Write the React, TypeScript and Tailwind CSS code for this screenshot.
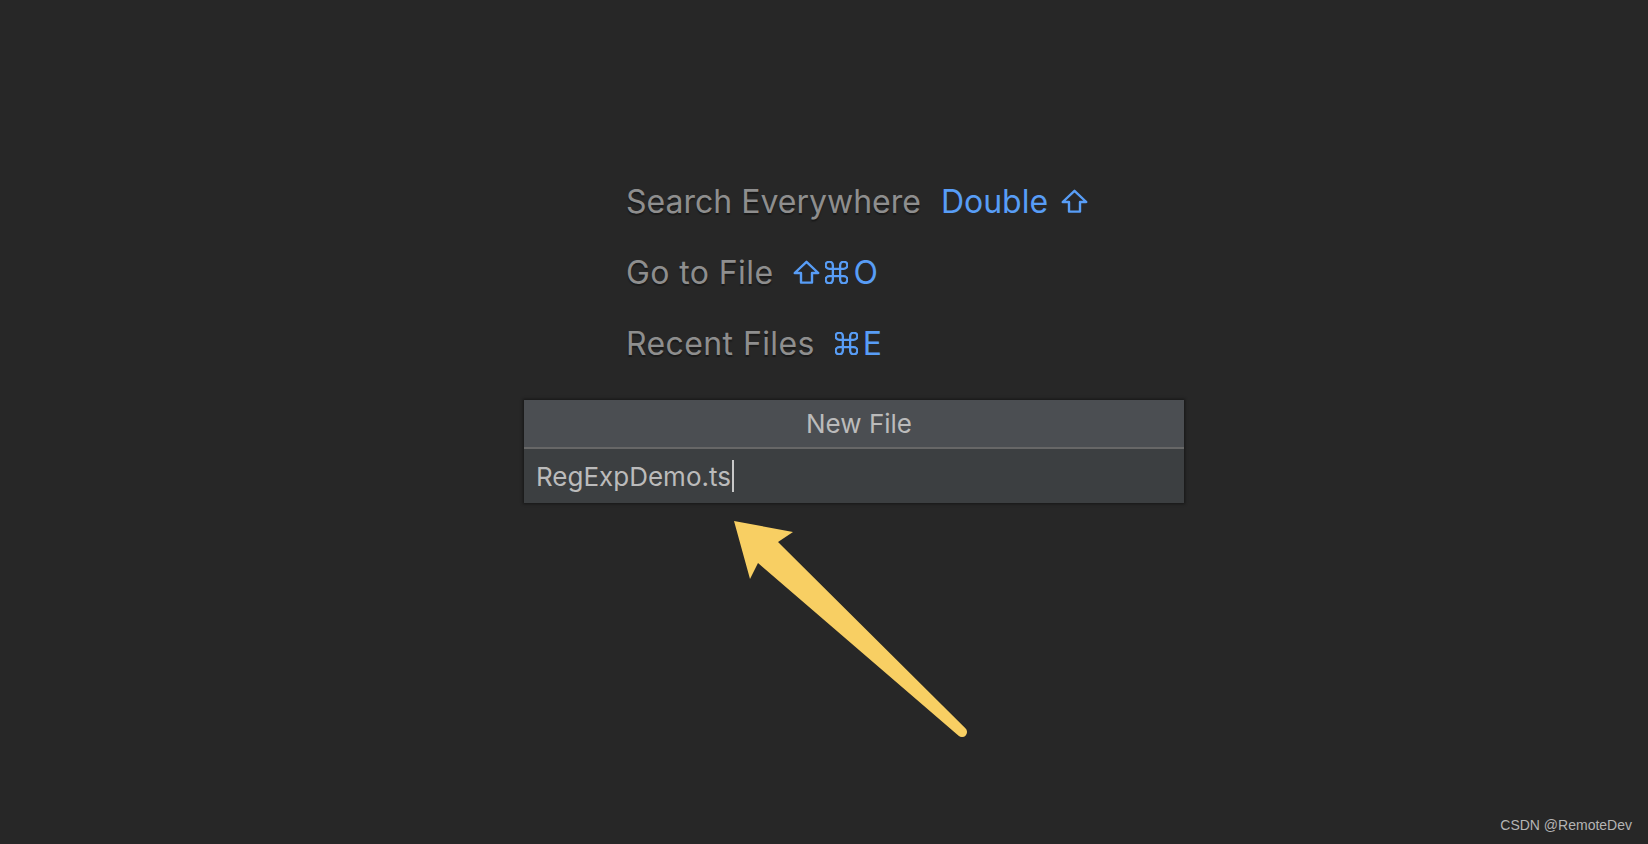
import React from 'react';

const ShiftKey = () => (
  <svg width="27" height="24" viewBox="0 0 27 24" fill="none" stroke="currentColor" strokeWidth="2.4" strokeLinejoin="round">
    <path d="M13.5 1.8 L25.3 13 H19 V22.6 H8 V13 H1.7 Z" />
  </svg>
);

const CmdKey = () => (
  <svg width="23" height="23" viewBox="2.5 2.5 19 19" fill="none" stroke="currentColor" strokeWidth="1.9" strokeLinecap="round" strokeLinejoin="round">
    <path d="M15 6v12a3 3 0 1 0 3-3H6a3 3 0 1 0 3 3V6a3 3 0 1 0-3 3h12a3 3 0 1 0-3-3" />
  </svg>
);

const Hint = ({ label, tight, children }: { label: string; tight?: boolean; children?: React.ReactNode }) => (
  <div className="flex items-baseline h-[71px] leading-[71px]">
    <span className={tight ? 'text-[#8e8e8e] [text-shadow:0_2px_1px_#1a1a1a]' : 'text-[#8e8e8e] tracking-[0.4px] [text-shadow:0_2px_1px_#1a1a1a]'}>{label}</span>
    <span className="ml-[20px] flex items-baseline gap-[5px] text-[#589df6]">{children}</span>
  </div>
);

export default function App() {
  return (
    <div className="relative w-full h-[844px] overflow-hidden bg-[#272727] font-['Inter','Noto_Sans',sans-serif]">
      <div className="pl-[626px] pt-[166px] text-[32px]">
        <Hint label="Search Everywhere" tight>
          <span>Double</span>
          <span className="ml-[8px]"><ShiftKey /></span>
        </Hint>
        <Hint label="Go to File">
          <ShiftKey />
          <CmdKey />
          <span>O</span>
        </Hint>
        <Hint label="Recent Files">
          <CmdKey />
          <span>E</span>
        </Hint>
      </div>

      {/* New File popup */}
      <div className="absolute left-[524px] top-[400px] w-[660px] shadow-[0_0_3px_1px_rgba(0,0,0,0.45)]">
        <div className="h-[47px] bg-[#4b4e52] flex items-center justify-center pl-[10px] text-[26px] text-[#bbbbbb]">New File</div>
        <div className="h-[2px] bg-[#676767]" />
        <div className="h-[54px] bg-[#3c3f41] flex items-center pl-[12px] text-[26px] text-[#bbbbbb]">
          <span>RegExpDemo.ts</span>
          <span className="w-[2px] h-[32px] bg-[#c8c8c8] ml-[1px]" />
        </div>
      </div>

      {/* annotation arrow */}
      <svg className="absolute left-0 top-0 pointer-events-none" width="1648" height="844" viewBox="0 0 1648 844">
        <path
          d="M734 521 L793 532 L778 542 L965.4 728.3 A5 5 0 0 1 958.6 735.7 L758 563 L750 579 Z"
          fill="#f8cf63"
        />
      </svg>

      <div className="absolute right-[16px] bottom-[8px] text-[14px] text-[#b4b4b4] font-['Liberation_Sans',Arial,sans-serif]">
        CSDN @RemoteDev
      </div>
    </div>
  );
}
